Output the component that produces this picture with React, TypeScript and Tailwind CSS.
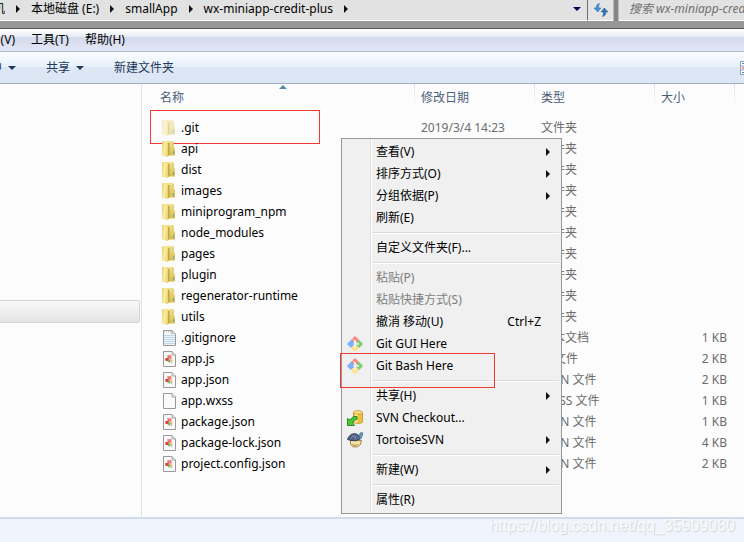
import { type ReactNode } from 'react';
import clsx from 'clsx';

type IconKind = 'folder' | 'hidden' | 'notepad' | 'script' | 'blank';

const files: { name: string; icon: IconKind; type: string; size?: string }[] = [
  { name: '.git', icon: 'hidden', type: '文件夹' },
  { name: 'api', icon: 'folder', type: '文件夹' },
  { name: 'dist', icon: 'folder', type: '文件夹' },
  { name: 'images', icon: 'folder', type: '文件夹' },
  { name: 'miniprogram_npm', icon: 'folder', type: '文件夹' },
  { name: 'node_modules', icon: 'folder', type: '文件夹' },
  { name: 'pages', icon: 'folder', type: '文件夹' },
  { name: 'plugin', icon: 'folder', type: '文件夹' },
  { name: 'regenerator-runtime', icon: 'folder', type: '文件夹' },
  { name: 'utils', icon: 'folder', type: '文件夹' },
  { name: '.gitignore', icon: 'notepad', type: '文本文档', size: '1 KB' },
  { name: 'app.js', icon: 'script', type: 'JS 文件', size: '2 KB' },
  { name: 'app.json', icon: 'script', type: 'JSON 文件', size: '2 KB' },
  { name: 'app.wxss', icon: 'blank', type: 'WXSS 文件', size: '1 KB' },
  { name: 'package.json', icon: 'script', type: 'JSON 文件', size: '1 KB' },
  { name: 'package-lock.json', icon: 'script', type: 'JSON 文件', size: '4 KB' },
  { name: 'project.config.json', icon: 'script', type: 'JSON 文件', size: '2 KB' },
];

const FolderIcon = ({ faded }: { faded?: boolean }) => (
  <svg width="16" height="16" viewBox="0 0 16 16" className={faded ? 'opacity-45' : ''} aria-hidden="true">
    <defs>
      <linearGradient id="folderFront" x1="0" x2="1" y1="0" y2="0.3">
        <stop offset="0" stopColor="#e3cc6c" />
        <stop offset="0.5" stopColor="#faf0a8" />
        <stop offset="1" stopColor="#ecd774" />
      </linearGradient>
      <linearGradient id="folderBack" x1="0" x2="0" y1="0" y2="1">
        <stop offset="0" stopColor="#f2e28c" />
        <stop offset="1" stopColor="#dbb946" />
      </linearGradient>
    </defs>
    <path d="M2 0h11.500v6.500H15V14.500H7V15H2z" fill="url(#folderBack)" />
    <path d="M7.500 2h2v12l-2 1.500z" fill="#c3a64c" />
    <path d="M12.800 1h.7v5.500h-.7z" fill="#d3b653" />
    <path d="M2 .5L7 .8 8 2.200V16L2 14.800z" fill="url(#folderFront)" />
    <path d="M13.200 10h1v3h-1z" fill="#5ba5cf" />
  </svg>
);

const PageIcon = ({ kind }: { kind: IconKind }) => (
  <svg width="16" height="16" viewBox="0 0 16 16" aria-hidden="true">
    <path d="M3.500 0.500H12L15.500 4V15.500H3.500z" fill="#fafafa" stroke="#999" />
    <path d="M12 0.500V4H15.500" fill="#e2e2e2" stroke="#a5a5a5" />
    {kind === 'notepad' && (
      <>
        <path d="M4 4h11v11H4z" fill="#eaf4fb" />
        <path d="M4 5.500h11M4 7.500h11M4 9.500h11M4 11.500h11M4 13.500h11" stroke="#bfd7e6" />
        <path d="M4.500 0v2.500M6.500 0v2.500M8.500 0v2.500M10.500 0v2.500M12.500 0v2.500" stroke="#a8b0b5" strokeWidth="0.800" />
      </>
    )}
    {kind === 'script' && (
      <>
        <path d="M7 4.200L11 4 12 7.200 8.500 8z" fill="#ec7f7c" />
        <path d="M5 7.500L8.500 6.200 9 10.500 5.500 9.800z" fill="#df4040" />
        <path d="M8.500 8.500L10.500 8 10.300 11.800 8.200 11z" fill="#66ba6a" />
        <path d="M10.500 7.800L13 9l-1.500 2.200-1.200-.7z" fill="#f0bd5a" />
        <path d="M11 10.500l1.500 1-1 1z" fill="#8fadd8" />
      </>
    )}
  </svg>
);

const GitIcon = () => (
  <svg width="16" height="16" viewBox="0 0 16 16" aria-hidden="true">
    <path d="M8 0L12.300 4.300 9.500 6.500 8 5 6 6.500 3.700 4.300z" fill="#f98585" />
    <path d="M4 3.800L7 6.500 6.500 8 7 9.500 4 12.200 0 8z" fill="#7fb0ff" />
    <path d="M12 3.800L16 8 12 12.200 9 9.500 10 8 9 6.500z" fill="#80cc72" />
    <path d="M3.700 11.700L6.500 9.500 8 11 9.500 9.500 12.300 11.700 8 16z" fill="#ffe28a" />
    <path d="M5.500 2.500L11 8M8 5V11" stroke="#f4f4f4" strokeWidth="0.800" />
    <circle cx="8" cy="5" r="1" fill="#f4f4f4" />
    <circle cx="8" cy="11" r="1" fill="#f4f4f4" />
    <circle cx="11" cy="8" r="1" fill="#f4f4f4" />
  </svg>
);

const CheckoutIcon = () => (
  <svg width="16" height="16" viewBox="0 0 16 16" aria-hidden="true">
    <path d="M6.500 2.200v9.600c0 2.100 9 2.100 9 0V2.200z" fill="#f0bf40" stroke="#c08e1c" strokeWidth="0.800" />
    <path d="M8 3v9.500h2.500V3z" fill="#ffeeae" />
    <ellipse cx="11" cy="2.400" rx="4.500" ry="1.700" fill="#ffe28a" stroke="#c99726" strokeWidth="0.800" />
    <path d="M10 6.500C6.500 6 4.200 7.500 3.300 10.200L.5 8.500V15.500H7.500L5.800 13C6 11 7.500 9.500 10 9.500z" fill="#4cc936" stroke="#16720f" strokeWidth="0.800" />
  </svg>
);

const TortoiseIcon = () => (
  <svg width="16" height="16" viewBox="0 0 16 16" aria-hidden="true">
    <path d="M3.500 8.500h11L13.500 12.500 10.500 14.800H6L3.500 12z" fill="#f3e2a0" stroke="#8a6f2f" strokeWidth="0.800" />
    <path d="M0.500 7.500C2 3 5 1.500 8 1.700c3 .2 4.500 2 5 5.300L9 8.800 4 8.500z" fill="#4f5d80" stroke="#27324c" strokeWidth="0.800" />
    <path d="M3.500 7L6 3.500l3 .5L8 7.500M6 3.500l2 4M9 4l2.500 3" fill="none" stroke="#7f8db0" strokeWidth="0.800" />
    <path d="M12 4.500L13 1l2.500-.5v3L14 6.500l-1 1z" fill="#5c9cc0" stroke="#33617f" strokeWidth="0.600" />
    <path d="M5 12.500c2 1 4 1 6 0" fill="none" stroke="#b88c48" />
  </svg>
);

const RefreshIcon = () => (
  <svg width="16" height="14" viewBox="0 0 16 14" aria-hidden="true">
    <path d="M6.500 0.500C4 1 3 2.500 3.200 5H1l3.700 4L8 5H5.600C5.500 3.200 5.800 1.800 6.500.5z" fill="#3e95d6" stroke="#2868a8" strokeWidth="0.500" />
    <path d="M9.500 13.500C12 13 13 11.500 12.800 9H15L11.300 5 8 9h2.400c.1 1.800-.2 3.200-.9 4.500z" fill="#2f72bb" stroke="#24588f" strokeWidth="0.500" />
  </svg>
);

const RightArrow = () => (
  <svg width="4" height="8" viewBox="0 0 4 8" className="shrink-0" aria-hidden="true">
    <path d="M0 0L4 4 0 8z" fill="#111" />
  </svg>
);

const DownArrow = ({ className = 'text-[#1e395b]' }: { className?: string }) => (
  <svg width="8" height="4" viewBox="0 0 8 4" className={clsx('shrink-0', className)} aria-hidden="true">
    <path d="M0 0H8L4 4z" fill="currentColor" />
  </svg>
);

const AddressBar = () => (
  <header className="flex h-[29px] bg-[#979797] pb-[7px] border-b border-[#555]">
    <div className="flex flex-1 min-w-0 items-center bg-[#e2e2e2] border-b border-white pb-0.5">
      <div className="flex w-[5px] justify-end overflow-hidden whitespace-nowrap">
        <button>计算机</button>
      </div>
      <div className="flex items-center gap-[11px] pl-[11px] whitespace-nowrap">
        <RightArrow />
        <button>本地磁盘 (E:)</button>
        <RightArrow />
        <button>smallApp</button>
        <RightArrow />
        <button>wx-miniapp-credit-plus</button>
        <RightArrow />
      </div>
      <button aria-label="历史记录" className="ml-auto mr-1.5">
        <DownArrow className="text-[#00005a]" />
      </button>
    </div>
    <button aria-label="刷新" className="flex w-[26px] items-center justify-center border-l border-b border-l-[#6f6f6f] border-b-white bg-[#e4e4e4]">
      <RefreshIcon />
    </button>
    <div className="w-[6px] border-x border-[#bbb] bg-[#858585]" />
    <input
      aria-label="搜索"
      placeholder="搜索 wx-miniapp-credit-plus"
      className="w-[125px] border-b border-white bg-[#e2e2e2] pl-[10px] pb-0.5 italic outline-none placeholder:text-[#707070]"
    />
  </header>
);

const MenuBar = () => (
  <nav className="flex h-[23px] items-center border-b border-[#b4b9cf] bg-[linear-gradient(#ffffff,#e8ebf5_35%,#d4daec_36%,#e2e7f6)] whitespace-nowrap">
    <div className="flex w-[15px] justify-end">
      <button>查看(V)</button>
    </div>
    <button className="ml-4">工具(T)</button>
    <button className="ml-4">帮助(H)</button>
  </nav>
);

const Toolbar = () => (
  <div className="flex h-[32px] items-center border-b border-[#a0afc9] bg-[linear-gradient(#fbfdff,#e6f1fb_48%,#dce6f4_49%,#dce6f4)] text-[#1e395b] whitespace-nowrap">
    <div className="flex w-4 justify-end">
      <button className="flex items-center gap-1.5">包含到库中 <DownArrow /></button>
    </div>
    <button className="ml-[30px] flex items-center gap-1.5">共享 <DownArrow /></button>
    <button className="ml-[30px]">新建文件夹</button>
    <button aria-label="更改您的视图" className="ml-auto w-1 overflow-hidden">
      <svg width="16" height="14" viewBox="0 0 16 14" aria-hidden="true">
        <path d="M.5.5h15v13H.5zM.5 5h15M.5 9h15" fill="#fff" stroke="#8aa0bd" />
        <path d="M2 2h2v1H2z" fill="#4c8bc9" />
        <path d="M2 6.500h2v1H2z" fill="#d33" />
        <path d="M2 11h2v1H2z" fill="#4c8bc9" />
      </svg>
    </button>
  </div>
);

const HeadCell = ({ children, sorted }: { children?: ReactNode; sorted?: boolean }) => (
  <th className="relative h-[33px] p-0 pb-1.5 text-left font-normal text-[#4c607a]">
    <button className={sorted ? 'pl-[18px]' : 'pl-1.5'}>{children}</button>
    {sorted && (
      <svg width="8" height="4" viewBox="0 0 8 4" className="absolute left-1/2 top-px" aria-hidden="true">
        <path d="M0 4L4 0 8 4z" fill="#4f8aab" />
      </svg>
    )}
    <span className="absolute right-0 top-0 h-6 w-px bg-linear-to-b from-[#d5e5f5] to-[#fcfcfc]" />
  </th>
);

const FileTable = () => (
  <table className="w-[593px] table-fixed border-collapse text-[#6d6d6d]">
    <colgroup>
      <col className="w-[273px]" />
      <col className="w-[120px]" />
      <col className="w-[120px]" />
      <col className="w-[80px]" />
    </colgroup>
    <thead>
      <tr>
        <HeadCell sorted>名称</HeadCell>
        <HeadCell>修改日期</HeadCell>
        <HeadCell>类型</HeadCell>
        <HeadCell>大小</HeadCell>
      </tr>
    </thead>
    <tbody>
      {files.map((file, i) => (
        <tr key={file.name} className="h-[21px]">
          <td className="relative p-0 pl-[18px]">
            <div className="flex items-center gap-[5px] text-black">
              {file.icon === 'folder' || file.icon === 'hidden' ? (
                <FolderIcon faded={file.icon === 'hidden'} />
              ) : (
                <PageIcon kind={file.icon} />
              )}
              {file.name}
            </div>
            {i === 0 && (
              <span className="absolute -top-[7px] left-2 h-[34px] w-[170px] border border-[#f03a36]" />
            )}
          </td>
          <td className="p-0 pl-1.5">2019/3/4 14:23</td>
          <td className="p-0 pl-1.5">{file.type}</td>
          <td className="p-0 pr-2 text-right">{file.size}</td>
        </tr>
      ))}
    </tbody>
  </table>
);

type MenuItemProps = {
  children: ReactNode;
  icon?: ReactNode;
  shortcut?: string;
  submenu?: boolean;
  disabled?: boolean;
};

const MenuItem = ({ children, icon, shortcut, submenu, disabled }: MenuItemProps) => (
  <button
    role="menuitem"
    disabled={disabled}
    className="flex h-[22px] w-full items-center text-left disabled:text-[#7d7d7d]"
  >
    <span className="flex w-8 shrink-0 pl-[3px]">{icon}</span>
    <span className="flex-1">{children}</span>
    {shortcut && <span className="pr-[18px]">{shortcut}</span>}
    {submenu && <span className="pr-[9px]"><RightArrow /></span>}
  </button>
);

const Separator = () => (
  <div role="separator" className="flex h-2 items-center pl-7">
    <div className="h-0.5 w-full border-b border-white bg-[#dcdcdc]" />
  </div>
);

const ContextMenu = () => (
  <div
    role="menu"
    className="absolute left-[341px] top-[138px] w-[221px] border border-[#979797] bg-[#f0f0f0] bg-[linear-gradient(90deg,transparent_28px,#e0e0e0_28px,#e0e0e0_29px,#ffffff_29px,#ffffff_30px,transparent_30px)] p-0.5"
  >
    <MenuItem submenu>查看(V)</MenuItem>
    <MenuItem submenu>排序方式(O)</MenuItem>
    <MenuItem submenu>分组依据(P)</MenuItem>
    <MenuItem>刷新(E)</MenuItem>
    <Separator />
    <MenuItem>自定义文件夹(F)...</MenuItem>
    <Separator />
    <MenuItem disabled>粘贴(P)</MenuItem>
    <MenuItem disabled>粘贴快捷方式(S)</MenuItem>
    <MenuItem shortcut="Ctrl+Z">撤消 移动(U)</MenuItem>
    <MenuItem icon={<GitIcon />}>Git GUI Here</MenuItem>
    <div className="relative">
      <MenuItem icon={<GitIcon />}>Git Bash Here</MenuItem>
      <span className="absolute -left-1 -top-0.5 h-[35px] w-[155px] border border-[#f03a36]" />
    </div>
    <Separator />
    <MenuItem submenu>共享(H)</MenuItem>
    <MenuItem icon={<CheckoutIcon />}>SVN Checkout...</MenuItem>
    <MenuItem icon={<TortoiseIcon />} submenu>TortoiseSVN</MenuItem>
    <Separator />
    <MenuItem submenu>新建(W)</MenuItem>
    <Separator />
    <MenuItem>属性(R)</MenuItem>
  </div>
);

const App = () => {
  return (
    <div className="relative flex min-h-screen flex-col overflow-hidden bg-[#fcfcfc] font-['Noto_Sans','Noto_Sans_CJK_SC',sans-serif] text-[12px] leading-4 text-black">
      <AddressBar />
      <MenuBar />
      <Toolbar />
      <main className="flex flex-1">
        <aside className="w-[142px] shrink-0 border-r border-[#d9e5f0] pt-[216px]">
          <div className="mr-px h-[23px] rounded-r-[3px] border border-l-0 border-[#d4d4d4] bg-linear-to-b from-[#fafafa] to-[#e4e4e4]" />
        </aside>
        <div className="min-w-0 flex-1">
          <FileTable />
        </div>
      </main>
      <footer className="h-[25px] border-t-2 border-[#cfdcec] bg-[#f0f4fc]" />
      <ContextMenu />
      <p className="absolute bottom-2 right-[9px] font-['Liberation_Sans',sans-serif] text-[16px] text-[#f9fafc] [text-shadow:1px_1px_1px_#d0d4da]">
        https://blog.csdn.net/qq_35909080
      </p>
    </div>
  );
};

export default App;
